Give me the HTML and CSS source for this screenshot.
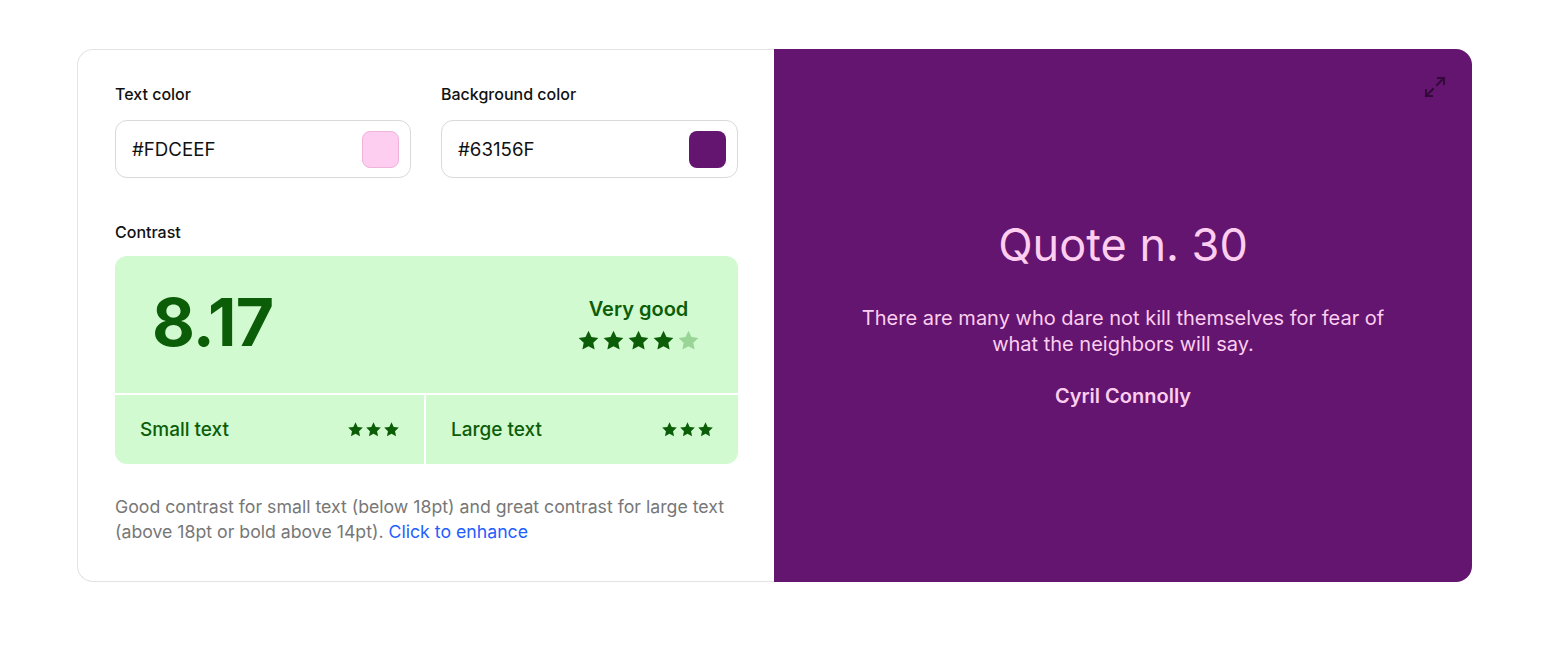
FILE: index.html
```html
<!DOCTYPE html>
<html lang="en">
<head>
<meta charset="utf-8">
<title>Contrast checker</title>
<link rel="stylesheet" href="styles.css">
</head>
<body>
<main class="card">
  <section class="controls">
    <div class="pickers">
      <div class="field">
        <label class="label">Text color</label>
        <div class="input">
          <span class="hex">#FDCEEF</span>
          <span class="swatch swatch-text"></span>
        </div>
      </div>
      <div class="field">
        <label class="label">Background color</label>
        <div class="input">
          <span class="hex">#63156F</span>
          <span class="swatch swatch-bg"></span>
        </div>
      </div>
    </div>

    <div class="label contrast-label">Contrast</div>
    <div class="contrast">
      <div class="score-row">
        <div class="score">8.17</div>
        <div class="rating">
          <div class="rating-text">Very good</div>
          <div class="stars big">
            <svg viewBox="0 0 24 24"><path d="M12 1.8l3.1 6.6 7.2.9-5.3 5 1.4 7.1L12 17.9l-6.4 3.5 1.4-7.1-5.3-5 7.2-.9z"/></svg>
            <svg viewBox="0 0 24 24"><path d="M12 1.8l3.1 6.6 7.2.9-5.3 5 1.4 7.1L12 17.9l-6.4 3.5 1.4-7.1-5.3-5 7.2-.9z"/></svg>
            <svg viewBox="0 0 24 24"><path d="M12 1.8l3.1 6.6 7.2.9-5.3 5 1.4 7.1L12 17.9l-6.4 3.5 1.4-7.1-5.3-5 7.2-.9z"/></svg>
            <svg viewBox="0 0 24 24"><path d="M12 1.8l3.1 6.6 7.2.9-5.3 5 1.4 7.1L12 17.9l-6.4 3.5 1.4-7.1-5.3-5 7.2-.9z"/></svg>
            <svg class="off" viewBox="0 0 24 24"><path d="M12 1.8l3.1 6.6 7.2.9-5.3 5 1.4 7.1L12 17.9l-6.4 3.5 1.4-7.1-5.3-5 7.2-.9z"/></svg>
          </div>
        </div>
      </div>
      <div class="sub-row">
        <div class="sub">
          <span>Small text</span>
          <div class="stars small">
            <svg viewBox="0 0 24 24"><path d="M12 1.8l3.1 6.6 7.2.9-5.3 5 1.4 7.1L12 17.9l-6.4 3.5 1.4-7.1-5.3-5 7.2-.9z"/></svg>
            <svg viewBox="0 0 24 24"><path d="M12 1.8l3.1 6.6 7.2.9-5.3 5 1.4 7.1L12 17.9l-6.4 3.5 1.4-7.1-5.3-5 7.2-.9z"/></svg>
            <svg viewBox="0 0 24 24"><path d="M12 1.8l3.1 6.6 7.2.9-5.3 5 1.4 7.1L12 17.9l-6.4 3.5 1.4-7.1-5.3-5 7.2-.9z"/></svg>
          </div>
        </div>
        <div class="sub">
          <span>Large text</span>
          <div class="stars small">
            <svg viewBox="0 0 24 24"><path d="M12 1.8l3.1 6.6 7.2.9-5.3 5 1.4 7.1L12 17.9l-6.4 3.5 1.4-7.1-5.3-5 7.2-.9z"/></svg>
            <svg viewBox="0 0 24 24"><path d="M12 1.8l3.1 6.6 7.2.9-5.3 5 1.4 7.1L12 17.9l-6.4 3.5 1.4-7.1-5.3-5 7.2-.9z"/></svg>
            <svg viewBox="0 0 24 24"><path d="M12 1.8l3.1 6.6 7.2.9-5.3 5 1.4 7.1L12 17.9l-6.4 3.5 1.4-7.1-5.3-5 7.2-.9z"/></svg>
          </div>
        </div>
      </div>
    </div>

    <p class="note">Good contrast for small text (below 18pt) and great contrast for large text (above 18pt or bold above 14pt). <a href="#" class="link">Click to enhance</a></p>
  </section>

  <section class="preview">
    <button class="expand" aria-label="Expand">
      <svg viewBox="0 0 24 24"><path d="M14 10l7-7M15 3h6v6M10 14l-7 7M3 15v6h6"/></svg>
    </button>
    <div class="quote">
      <h1 class="quote-title">Quote n. 30</h1>
      <p class="quote-text">There are many who dare not kill themselves for fear of what the neighbors will say.</p>
      <p class="quote-author">Cyril Connolly</p>
    </div>
  </section>
</main>
</body>
</html>
```

FILE: styles.css
```css
* { box-sizing: border-box; }

html, body {
  margin: 0;
  background: #ffffff;
}

body {
  font-family: Inter, "Noto Sans", "Liberation Sans", sans-serif;
  color: #111;
  padding-top: 49px;
}

.card {
  width: 1395px;
  margin: 0 0 0 77px;
  display: grid;
  grid-template-columns: 697px 1fr;
  border-radius: 16px;
  height: 533px;
}

.controls {
  border: 1px solid #e3e3e3;
  border-right: none;
  border-radius: 16px 0 0 16px;
  padding: 35px 36px 36px 37px;
  display: flex;
  flex-direction: column;
}

.pickers {
  display: grid;
  grid-template-columns: 296px 1fr;
  gap: 30px;
}

.field {
  display: flex;
  flex-direction: column;
}

.label {
  font-size: 16px;
  font-weight: 500;
  line-height: 18px;
  color: #111;
}

.input {
  margin-top: 17px;
  height: 58px;
  border: 1px solid #d9d9d9;
  border-radius: 12px;
  display: flex;
  align-items: center;
  justify-content: space-between;
  padding: 0 11px 0 16px;
}

.hex {
  font-size: 18.7px;
  color: #111;
}

.swatch {
  width: 37px;
  height: 37px;
  border-radius: 8px;
}

.swatch-text {
  background: #FDCEEF;
  border: 1px solid #efb3dc;
}

.swatch-bg {
  background: #63156F;
}

.contrast-label {
  margin-top: 45px;
}

.contrast {
  margin-top: 15px;
  border-radius: 12px;
  overflow: hidden;
  display: flex;
  flex-direction: column;
  gap: 2px;
  background: #ffffff;
}

.score-row {
  background: #d2fad0;
  height: 137px;
  display: flex;
  align-items: center;
  justify-content: space-between;
  padding: 0 38px 0 37px;
  color: #0c5d08;
}

.score {
  font-size: 66px;
  font-weight: 700;
  letter-spacing: -0.8px;
  line-height: 1;
  margin-top: -6px;
}

.rating {
  display: flex;
  flex-direction: column;
  align-items: center;
  margin-top: -1px;
}

.rating-text {
  font-size: 20px;
  font-weight: 600;
  line-height: 24px;
}

.stars {
  display: flex;
  fill: #0c5d08;
}

.stars.big {
  gap: 2px;
  margin-top: 8px;
}

.stars.big svg {
  width: 23px;
  height: 23px;
}

.stars svg.off {
  fill: #98d596;
}

.sub-row {
  display: grid;
  grid-template-columns: 309px 1fr;
  gap: 2px;
  height: 69px;
}

.sub {
  background: #d2fad0;
  color: #0c5d08;
  display: flex;
  align-items: center;
  justify-content: space-between;
  padding: 0 24px 0 25px;
  font-size: 19px;
  font-weight: 500;
}

.stars.small {
  gap: 1px;
}

.stars.small svg {
  width: 17px;
  height: 17px;
}

.note {
  margin: 30px 0 0;
  font-size: 17.7px;
  line-height: 25px;
  color: #777777;
}

.link {
  color: #1f5eff;
  text-decoration: none;
}

.preview {
  background: #63156F;
  border-radius: 0 16px 16px 0;
  position: relative;
  display: flex;
  align-items: center;
  justify-content: center;
}

.expand {
  position: absolute;
  top: 26px;
  right: 25px;
  width: 24px;
  height: 24px;
  padding: 0;
  border: none;
  background: none;
}

.expand svg {
  width: 24px;
  height: 24px;
  fill: none;
  stroke: #340a3b;
  stroke-width: 2;
  stroke-linecap: square;
}

.quote {
  display: flex;
  flex-direction: column;
  align-items: center;
  text-align: center;
  color: #FDCEEF;
  margin-top: -4px;
}

.quote-title {
  margin: 0;
  font-size: 45px;
  font-weight: 400;
  line-height: 54px;
}

.quote-text {
  margin: 33px 0 0;
  max-width: 540px;
  font-size: 20px;
  line-height: 26px;
}

.quote-author {
  margin: 26px 0 0;
  font-size: 20px;
  font-weight: 600;
  line-height: 26px;
}
```
